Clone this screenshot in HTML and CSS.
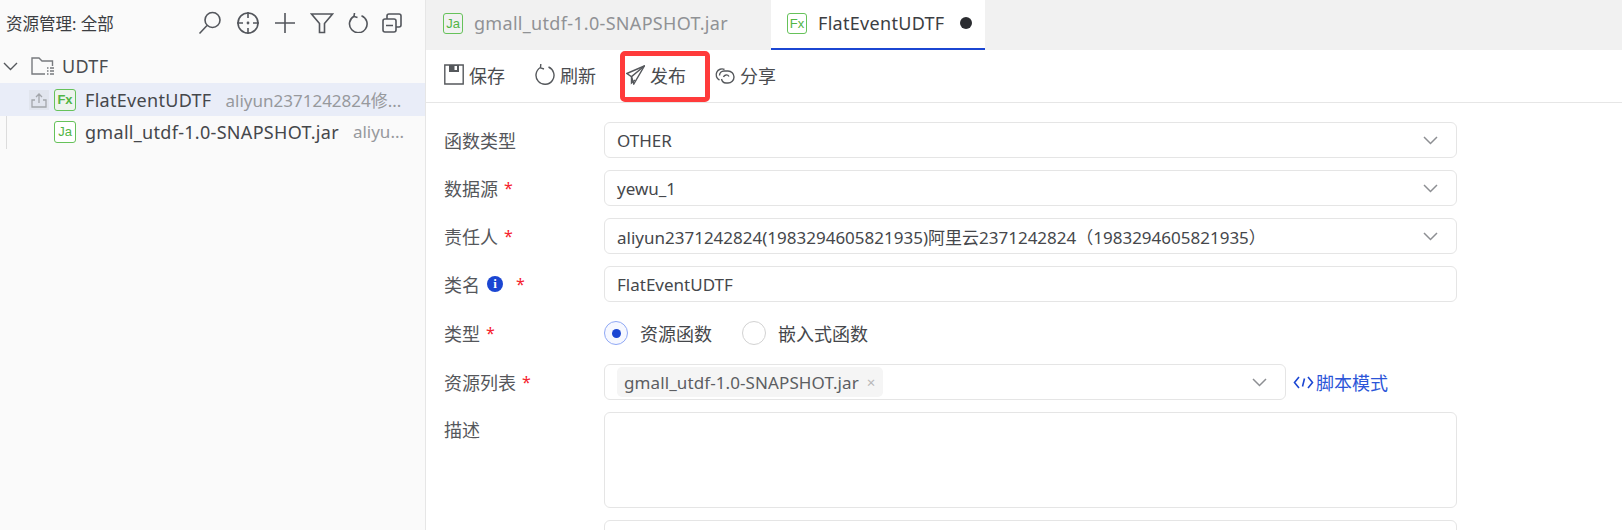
FILE: index.html
```html
<!DOCTYPE html>
<html lang="zh-CN">
<head>
<meta charset="utf-8">
<title>FlatEventUDTF</title>
<link rel="stylesheet" href="styles.css">
</head>
<body>
<div class="app">
  <aside class="sidebar">
    <div class="side-head">
      <span class="side-title">资源管理: 全部</span>
      <div class="side-tools">
        <svg class="ti" width="24" height="24" viewBox="0 0 24 24"><circle cx="14.500" cy="9" r="7.500"/><path d="M9 14.500 1.500 22.500"/></svg>
        <svg class="ti" width="24" height="24" viewBox="0 0 24 24"><circle cx="12" cy="12" r="10"/><path d="M12 1v6M12 17v6M1 12h6M17 12h6"/><circle cx="12" cy="12" r=".6"/></svg>
        <svg class="ti" width="22" height="22" viewBox="0 0 22 22"><path d="M11 1v20M1 11h20"/></svg>
        <svg class="ti" width="24" height="24" viewBox="0 0 24 24"><path d="M1.500 3h21l-8 9.500v9h-5v-9z"/></svg>
        <svg class="ti" width="20" height="20" viewBox="0 0 20 20"><path d="M6 3.200A8.800 8.800 0 1 0 13.500 2.700"/><path d="M6.500 0 6 3.500 9.500 4.500"/></svg>
        <svg class="ti" width="20" height="20" viewBox="0 0 20 20"><rect x="1" y="6" width="13" height="13" rx="2"/><path d="M5 6V3a2 2 0 0 1 2-2h10a2 2 0 0 1 2 2v9a2 2 0 0 1-2 2h-3M4 12.500h7"/></svg>
      </div>
    </div>
    <div class="tree">
      <div class="tree-root">
        <svg class="chev" width="15" height="9" viewBox="0 0 15 9"><path d="M1 1l6.500 6.500L14 1"/></svg>
        <svg class="folder" width="23" height="18" viewBox="0 0 23 18"><path d="M14 17H1V1h7l3 3h10.500v5"/><path class="dots" d="M16 11h1.500M19 11h4M16 14h1.500M19 14h4M16 17h1.500M19 17h4"/></svg>
        <span class="root-name">UDTF</span>
      </div>
      <div class="tree-row selected">
        <span class="publish-box">
          <svg width="16" height="16" viewBox="0 0 16 16"><path d="M8 11V2M5 5l3-3 3 3M4 8H1v7h14V8h-3"/></svg>
        </span>
        <span class="file-badge">Fx</span>
        <span class="file-name">FlatEventUDTF</span>
        <span class="file-meta">aliyun2371242824修...</span>
      </div>
      <div class="tree-row child">
        <span class="file-badge">Ja</span>
        <span class="file-name">gmall_utdf-1.0-SNAPSHOT.jar</span>
        <span class="file-meta">aliyu...</span>
      </div>
    </div>
  </aside>
  <main class="main">
    <div class="tabs">
      <div class="tab">
        <span class="file-badge small">Ja</span>
        <span>gmall_utdf-1.0-SNAPSHOT.jar</span>
      </div>
      <div class="tab active">
        <span class="file-badge small">Fx</span>
        <span>FlatEventUDTF</span>
        <span class="dirty"></span>
      </div>
    </div>
    <div class="toolbar">
      <div class="tool">
        <svg width="20" height="21" viewBox="0 0 20 21"><path d="M.8 1h18.400v19H.800z"/><path class="fill" d="M5 1h10v7H5z"/><path class="notch" d="M10.500 2h2.500v4h-2.500z"/></svg>
        <span>保存</span>
      </div>
      <div class="tool">
        <svg width="20" height="21" viewBox="0 0 20 21"><path d="M5.500 3.500A9 9 0 1 0 13.500 3"/><path d="M5.800 0 5.500 3.800 9 5"/></svg>
        <span>刷新</span>
      </div>
      <div class="tool">
        <svg width="19" height="20" viewBox="0 0 19 20"><path d="M18.300 1 .8 8.500l4.700 3.200L7.800 19z"/><path d="M18.300 1 5.500 11.700V18l3.500-3"/></svg>
        <span>发布</span>
      </div>
      <div class="tool">
        <svg class="share" width="21" height="18" viewBox="0 0 21 18"><path d="M10.500 3.500A5.800 5.800 0 1 0 5.500 14"/><path d="M5.500 9.500A4.500 4.500 0 0 1 10 5h4a6 6 0 0 1 0 12h-2a5 5 0 0 1-4.500-4"/><path d="M9.500 11a3 3 0 0 1 5.500-.5"/></svg>
        <span>分享</span>
      </div>
      <div class="highlight"></div>
    </div>
    <form class="form">
      <div class="row">
        <div class="label">函数类型</div>
        <div class="control select"><span>OTHER</span><svg class="arrow" width="15" height="9" viewBox="0 0 15 9"><path d="M1 1l6.500 6.500L14 1"/></svg></div>
      </div>
      <div class="row">
        <div class="label">数据源<span class="req">*</span></div>
        <div class="control select"><span>yewu_1</span><svg class="arrow" width="15" height="9" viewBox="0 0 15 9"><path d="M1 1l6.500 6.500L14 1"/></svg></div>
      </div>
      <div class="row">
        <div class="label">责任人<span class="req">*</span></div>
        <div class="control select"><span>aliyun2371242824(1983294605821935)阿里云2371242824（1983294605821935）</span><svg class="arrow" width="15" height="9" viewBox="0 0 15 9"><path d="M1 1l6.500 6.500L14 1"/></svg></div>
      </div>
      <div class="row">
        <div class="label">类名<span class="info">i</span><span class="req wide">*</span></div>
        <div class="control"><span>FlatEventUDTF</span></div>
      </div>
      <div class="row">
        <div class="label">类型<span class="req">*</span></div>
        <div class="radios">
          <span class="radio on"></span><span class="radio-text">资源函数</span>
          <span class="radio"></span><span class="radio-text">嵌入式函数</span>
        </div>
      </div>
      <div class="row">
        <div class="label">资源列表<span class="req">*</span></div>
        <div class="control select narrow">
          <span class="tag">gmall_utdf-1.0-SNAPSHOT.jar<span class="tag-x">×</span></span>
          <svg class="arrow" width="15" height="9" viewBox="0 0 15 9"><path d="M1 1l6.500 6.500L14 1"/></svg>
        </div>
        <div class="script-link">
          <svg width="21" height="13" viewBox="0 0 21 13"><path d="M6 1 1.500 6.500 6 12M15 1l4.500 5.500L15 12M11.500 2.500 9.500 10.500"/></svg>
          <span>脚本模式</span>
        </div>
      </div>
      <div class="row top">
        <div class="label desc">描述</div>
        <div class="control area"></div>
      </div>
      <div class="row">
        <div class="label"></div>
        <div class="control"></div>
      </div>
    </form>
  </main>
</div>
</body>
</html>
```
FILE: styles.css
```css
* { box-sizing: border-box; }
html, body { margin: 0; height: 530px; overflow: hidden; background: #fff; }
body {
  font-family: "Noto Sans", "Noto Sans CJK SC", sans-serif;
  font-size: 18px;
  letter-spacing: .3px;
  color: #4a4c50;
}
.app { display: flex; height: 530px; overflow: hidden; }

/* sidebar */
.sidebar {
  width: 426px;
  flex: none;
  background: #fafafa;
  border-right: 1px solid #e6e6e6;
}
.side-head {
  height: 46px;
  display: flex;
  align-items: center;
  justify-content: space-between;
  padding: 0 23px 0 6px;
}
.side-title { font-size: 16.500px; letter-spacing: 0; color: #3c3e42; }
.side-tools { display: flex; align-items: center; gap: 14px; }
.ti { fill: none; stroke: #53565c; stroke-width: 1.6; }
.tree-root {
  height: 37px;
  display: flex;
  align-items: center;
  padding: 3px 0 0 3px;
}
.chev { fill: none; stroke: #55585c; stroke-width: 1.4; margin-right: 13px; }
.folder { fill: none; stroke: #777a7e; stroke-width: 1.4; margin-right: 8px; }
.root-name { color: #4a4c50; }
.tree-row {
  height: 33px;
  display: flex;
  align-items: center;
  padding-left: 54px;
  white-space: nowrap;
}
.tree-row.selected { background: #e9edf8; padding-left: 29px; }
.tree-row.child { border-left: 1px solid #dcdcdc; margin-left: 6px; padding: 0 0 2px 47px; }
.publish-box {
  width: 20px;
  height: 20px;
  margin-right: 5px;
  background: #e1e5ee;
  display: flex;
  align-items: center;
  justify-content: center;
}
.publish-box svg { fill: none; stroke: #a3a6ab; stroke-width: 1.3; }
.file-badge {
  width: 22px;
  height: 22px;
  flex: none;
  border: 1.5px solid #66c25a;
  border-radius: 3px;
  color: #52b545;
  background: #fff;
  font-family: "Liberation Sans", sans-serif;
  font-size: 13px;
  letter-spacing: 0;
  display: flex;
  align-items: center;
  justify-content: center;
  margin-right: 9px;
}
.selected .file-badge { background: #eef3ee; font-weight: bold; }
.file-name { color: #45474b; }
.file-meta { color: #97999d; margin-left: 14px; font-size: 17px; letter-spacing: 0; }

/* main */
.main { flex: 1; min-width: 0; display: flex; flex-direction: column; }
.tabs { height: 50px; background: #f1f1f1; display: flex; flex: none; }
.tab {
  width: 345px;
  display: flex;
  align-items: center;
  padding: 0 0 4px 17px;
  color: #909295;
  white-space: nowrap;
}
.tab.active {
  width: 214px;
  background: #fff;
  color: #3c3e42;
  border-bottom: 2px solid #1b46d2;
  padding: 0 0 2px 16px;
}
.file-badge.small { width: 20px; height: 21px; font-size: 13px; background: transparent; margin-right: 11px; }
.dirty {
  width: 12px;
  height: 12px;
  border-radius: 50%;
  background: #2a2c30;
  margin-left: 15px;
}
.toolbar {
  position: relative;
  height: 53px;
  flex: none;
  display: flex;
  align-items: center;
  padding: 0 0 3px 18px;
  border-bottom: 1.5px solid #e6e6e6;
}
.tool { display: flex; align-items: center; gap: 5px; margin-right: 30px; color: #4a4c50; font-size: 18px; letter-spacing: 0; }
.tool:nth-child(3) { margin-right: 28px; }
.tool svg { fill: none; stroke: #55585c; stroke-width: 1.4; flex: none; }
.tool svg .fill { fill: #55585c; stroke: none; }
.tool svg .notch { fill: #fff; stroke: none; }
.highlight {
  position: absolute;
  left: 194px;
  top: 1px;
  width: 90px;
  height: 51px;
  border: 5px solid #ff3b3b;
  border-radius: 5px;
}

/* form */
.form { padding: 19px 0 0 18px; }
.row { display: flex; align-items: center; margin-bottom: 12px; min-height: 36px; }
.row.top { align-items: flex-start; }
.label { width: 160px; flex: none; font-size: 18px; letter-spacing: 0; color: #55575b; display: flex; align-items: center; }
.label.desc { padding-top: 4px; }
.req { color: #f5222d; margin-left: 6px; font-size: 16px; }
.req.wide { margin-left: 13px; }
.info {
  width: 16px;
  height: 16px;
  margin-left: 7px;
  border-radius: 50%;
  background: #1b46d2;
  color: #fff;
  font-family: "Liberation Serif", serif;
  font-weight: bold;
  font-size: 13px;
  line-height: 16px;
  text-align: center;
}
.control {
  width: 852.500px;
  height: 36px;
  border: 1.5px solid #e5e5e5;
  border-radius: 6px;
  padding: 0 12px;
  display: flex;
  align-items: center;
  justify-content: space-between;
  font-size: 17px;
  letter-spacing: 0;
  color: #45474b;
  white-space: nowrap;
}
.control.narrow { width: 682px; }
.control.area { height: 96px; }
.arrow { fill: none; stroke: #8d8f93; stroke-width: 1.5; margin-right: 6px; flex: none; }
.tag {
  height: 30px;
  padding: 0 7px;
  background: #f5f5f5;
  border-radius: 5px;
  display: flex;
  align-items: center;
  letter-spacing: .1px;
  color: #5c5e62;
}
.tag-x { color: #b8b8b8; margin-left: 8px; font-size: 15px; }
.radios { display: flex; align-items: center; height: 38px; }
.radio {
  width: 24px;
  height: 24px;
  border: 1.5px solid #d2d2d2;
  border-radius: 50%;
  background: #fff;
  margin-right: 12px;
  display: flex;
  align-items: center;
  justify-content: center;
}
.radio.on { border-color: #8fa8f5; background: #f6f8ff; }
.radio.on::after {
  content: "";
  width: 9px;
  height: 9px;
  border-radius: 50%;
  background: #1b46d2;
}
.radio-text { font-size: 18px; letter-spacing: 0; margin-right: 30px; color: #45474b; }
.script-link {
  display: flex;
  align-items: center;
  gap: 2px;
  margin-left: 7px;
  font-size: 18px;
  letter-spacing: 0;
  color: #2b55d8;
}
.script-link svg { fill: none; stroke: #1b46d2; stroke-width: 1.6; }
```
